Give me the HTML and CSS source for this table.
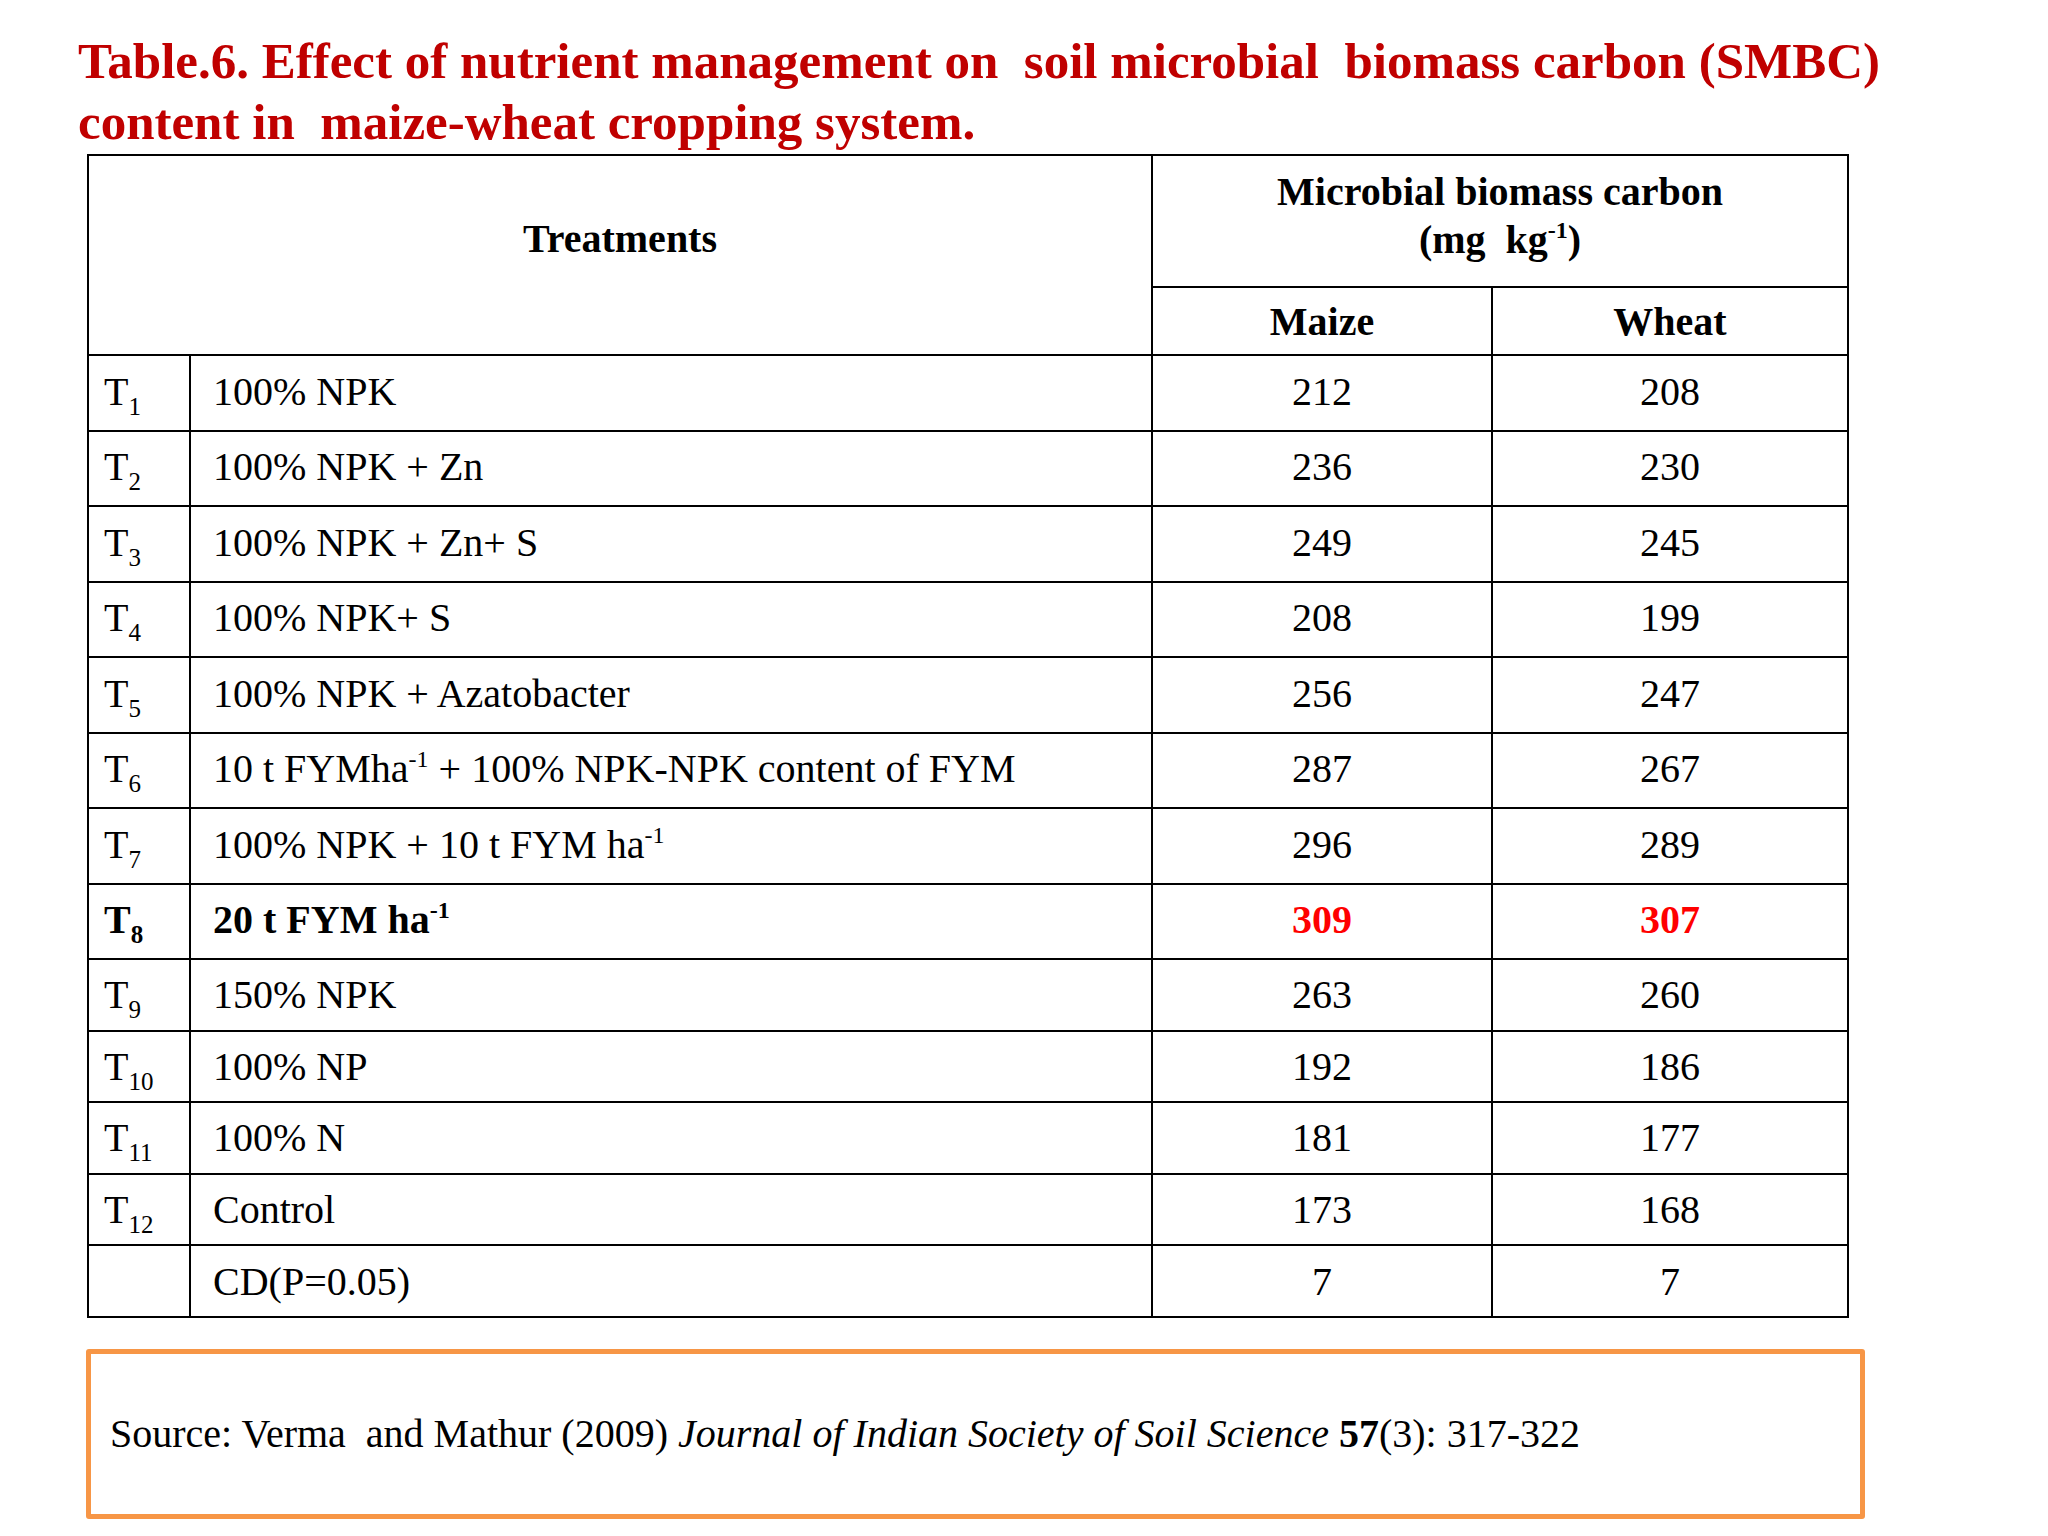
FILE: index.html
```html
<!DOCTYPE html>
<html lang="en">
<head>
<meta charset="utf-8">
<title>Table 6 - SMBC</title>
<link rel="stylesheet" href="styles.css">
</head>
<body>
<main class="slide">
  <h1 class="title">Table.6. Effect of nutrient management on&nbsp; soil microbial&nbsp; biomass carbon (SMBC)<br>content in&nbsp; maize-wheat cropping system.</h1>

  <table class="data">
    <colgroup>
      <col class="c-code">
      <col class="c-treat">
      <col class="c-maize">
      <col class="c-wheat">
    </colgroup>
    <thead>
      <tr class="hrow-1">
        <th class="th-treat" colspan="2" rowspan="2">Treatments</th>
        <th class="th-mbc" colspan="2">Microbial biomass carbon<br>(mg&nbsp; kg<sup class="sup">-1</sup>)</th>
      </tr>
      <tr class="hrow-2">
        <th class="th-crop">Maize</th>
        <th class="th-crop">Wheat</th>
      </tr>
    </thead>
    <tbody>
      <tr class="row-a"><td class="code">T<sub class="sub">1</sub></td><td class="treat">100% NPK</td><td class="num">212</td><td class="num">208</td></tr>
      <tr class="row-a"><td class="code">T<sub class="sub">2</sub></td><td class="treat">100% NPK + Zn</td><td class="num">236</td><td class="num">230</td></tr>
      <tr class="row-a"><td class="code">T<sub class="sub">3</sub></td><td class="treat">100% NPK + Zn+ S</td><td class="num">249</td><td class="num">245</td></tr>
      <tr class="row-a"><td class="code">T<sub class="sub">4</sub></td><td class="treat">100% NPK+ S</td><td class="num">208</td><td class="num">199</td></tr>
      <tr class="row-a"><td class="code">T<sub class="sub">5</sub></td><td class="treat">100% NPK + Azatobacter</td><td class="num">256</td><td class="num">247</td></tr>
      <tr class="row-a"><td class="code">T<sub class="sub">6</sub></td><td class="treat">10 t FYMha<sup class="sup">-1</sup> + 100% NPK-NPK content of FYM</td><td class="num">287</td><td class="num">267</td></tr>
      <tr class="row-a"><td class="code">T<sub class="sub">7</sub></td><td class="treat">100% NPK + 10 t FYM ha<sup class="sup">-1</sup></td><td class="num">296</td><td class="num">289</td></tr>
      <tr class="row-a best"><td class="code">T<sub class="sub">8</sub></td><td class="treat">20 t FYM ha<sup class="sup">-1</sup></td><td class="num hl">309</td><td class="num hl">307</td></tr>
      <tr class="row-b"><td class="code">T<sub class="sub">9</sub></td><td class="treat">150% NPK</td><td class="num">263</td><td class="num">260</td></tr>
      <tr class="row-b"><td class="code">T<sub class="sub">10</sub></td><td class="treat">100% NP</td><td class="num">192</td><td class="num">186</td></tr>
      <tr class="row-b"><td class="code">T<sub class="sub">11</sub></td><td class="treat">100% N</td><td class="num">181</td><td class="num">177</td></tr>
      <tr class="row-b"><td class="code">T<sub class="sub">12</sub></td><td class="treat">Control</td><td class="num">173</td><td class="num">168</td></tr>
      <tr class="row-b"><td class="code"></td><td class="treat">CD(P=0.05)</td><td class="num">7</td><td class="num">7</td></tr>
    </tbody>
  </table>

  <div class="source">
    <p class="source-text">Source: Verma&nbsp; and Mathur (2009) <em>Journal of Indian Society of Soil Science</em> <strong>57</strong>(3): 317-322</p>
  </div>
</main>
</body>
</html>
```

FILE: styles.css
```css
html, body {
  margin: 0;
  padding: 0;
  background: #ffffff;
}

body {
  font-family: "Liberation Serif", "Times New Roman", serif;
  color: #000;
}

.slide {
  width: 2048px;
  height: 1536px;
  padding-top: 31px;
  box-sizing: border-box;
  display: flex;
  flex-direction: column;
  align-items: flex-start;
}

.title {
  margin: 0 0 0 78px;
  font-size: 51px;
  line-height: 61px;
  font-weight: 700;
  color: #c00000;
  white-space: nowrap;
}

.data {
  margin: 1px 0 0 87px;
  border-collapse: collapse;
  table-layout: fixed;
  width: 1760px;
  font-size: 40px;
}

.c-code { width: 102px; }
.c-treat { width: 962px; }
.c-maize { width: 340px; }
.c-wheat { width: 356px; }

.data th,
.data td {
  border: 2px solid #000;
  padding: 0;
  vertical-align: middle;
  line-height: normal;
}

.data th {
  font-weight: 700;
  text-align: center;
}

.hrow-1 { height: 132px; }
.hrow-2 { height: 68px; }
.row-a { height: 75.5px; }
.row-b { height: 71.6px; }

.row-a td {
  padding-bottom: 3px;
}

.th-treat {
  padding-bottom: 34px !important;
}

.th-mbc {
  line-height: 48px !important;
  padding-bottom: 10px !important;
}

.code {
  padding-left: 15px !important;
  text-align: left;
}

.treat {
  padding-left: 22px !important;
  text-align: left;
}

.num {
  text-align: center;
}

.best .code,
.best .treat,
.hl {
  font-weight: 700;
}

.hl {
  color: #ff0000;
}

.sub {
  font-size: 25px;
  line-height: 0;
  vertical-align: -10px;
}

.sup {
  font-size: 24px;
  line-height: 0;
  vertical-align: 15px;
}

.source {
  margin: 31px 0 0 86px;
  width: 1779px;
  height: 170px;
  box-sizing: border-box;
  border: 5px solid #f79646;
  border-radius: 3px;
  padding-left: 19px;
  display: flex;
  align-items: center;
}

.source-text {
  margin: 0;
  font-size: 40px;
  white-space: nowrap;
}

.source-text em {
  font-style: italic;
}

.source-text strong {
  font-weight: 700;
}
```
